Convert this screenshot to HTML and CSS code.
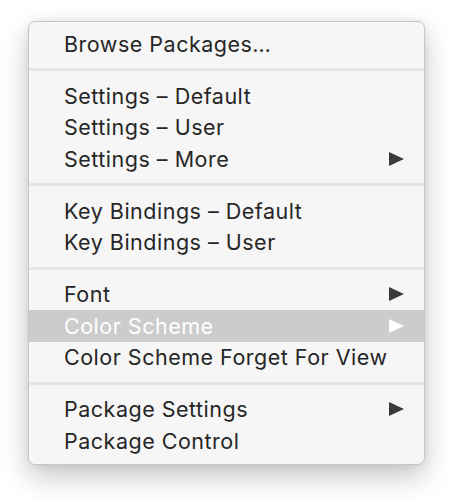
FILE: index.html
```html
<!DOCTYPE html>
<html>
<head>
<meta charset="utf-8">
<link rel="stylesheet" href="styles.css">
</head>
<body>
<div class="menu">
  <div class="item"><span class="label">Browse Packages…</span></div>
  <div class="sep"></div>
  <div class="item"><span class="label">Settings – Default</span></div>
  <div class="item"><span class="label">Settings – User</span></div>
  <div class="item"><span class="label">Settings – More</span><svg class="arrow" viewBox="0 0 15 14"><polygon points="0,0 15,7 0,14"/></svg></div>
  <div class="sep"></div>
  <div class="item"><span class="label">Key Bindings – Default</span></div>
  <div class="item"><span class="label">Key Bindings – User</span></div>
  <div class="sep"></div>
  <div class="item"><span class="label">Font</span><svg class="arrow" viewBox="0 0 15 14"><polygon points="0,0 15,7 0,14"/></svg></div>
  <div class="item active"><span class="label">Color Scheme</span><svg class="arrow" viewBox="0 0 15 14"><polygon points="0,0 15,7 0,14"/></svg></div>
  <div class="item"><span class="label">Color Scheme Forget For View</span></div>
  <div class="sep"></div>
  <div class="item"><span class="label">Package Settings</span><svg class="arrow" viewBox="0 0 15 14"><polygon points="0,0 15,7 0,14"/></svg></div>
  <div class="item"><span class="label">Package Control</span></div>
</div>
</body>
</html>
```
FILE: styles.css
```css
html, body {
  margin: 0;
  padding: 0;
  background: #ffffff;
}
body {
  padding: 21px 28px 40px 28px;
}
.menu {
  box-sizing: border-box;
  width: 397px;
  height: 444px;
  background: #f6f6f6;
  border: 1px solid #c6c6c6;
  border-radius: 7px;
  box-shadow: 0 12px 28px rgba(0, 0, 0, 0.22), 0 0 8px rgba(0, 0, 0, 0.08);
  padding: 6px 0;
  display: flex;
  flex-direction: column;
  font-family: Inter, "Noto Sans", sans-serif;
  font-size: 21.5px;
  letter-spacing: 0.5px;
  color: #262626;
}
.item {
  height: 31.7px;
  display: flex;
  align-items: center;
  justify-content: space-between;
  padding: 0 20px 0 35px;
}
.item.active {
  background: #cccccc;
  color: #ffffff;
}
.item.active .arrow {
  fill: #ffffff;
}
.arrow {
  width: 15px;
  height: 14px;
  fill: #3a3a3a;
}
.sep {
  height: 20px;
  display: flex;
  align-items: center;
}
.sep::before {
  content: "";
  display: block;
  width: 100%;
  height: 3px;
  background: #e4e4e4;
}
```
